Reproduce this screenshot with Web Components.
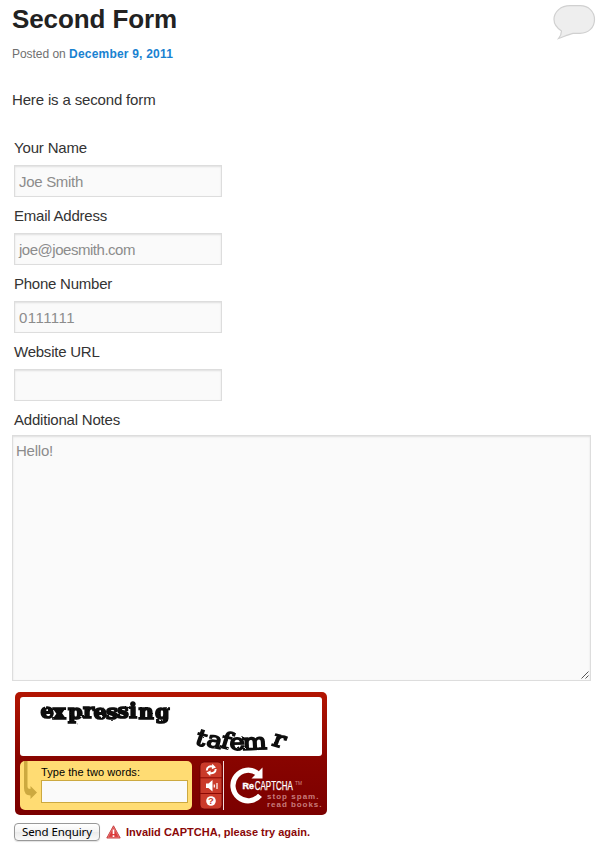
<!DOCTYPE html>
<html lang="en">
<head>
<meta charset="utf-8">
<title>Second Form</title>
<style>
body { margin: 0; background: #fff; font-family: "Liberation Sans", Arial, sans-serif; color: #222; }
</style>
</head>
<body>
<form-page></form-page>
<script>
const define = (name, html, setup) => {
  const t = document.createElement('template');
  t.innerHTML = html;
  customElements.define(name, class extends HTMLElement {
    connectedCallback() {
      if (this.shadowRoot) return;
      this.attachShadow({ mode: 'open' }).append(t.content.cloneNode(true));
      if (setup) setup(this, this.shadowRoot);
    }
  });
};

// One line of text, letter-spaced to take exactly the width given.
define('fit-text', `<style>:host{display:block;white-space:nowrap}span{display:inline-block}</style><span><slot></slot></span>`,
  (el, root) => {
    const s = root.querySelector('span');
    const w = s.getBoundingClientRect().width;
    s.style.letterSpacing = ((+el.getAttribute('width') - w) / el.textContent.length) + 'px';
  });

define('comment-bubble', `<style>:host{display:block;width:43px;height:36px;margin-top:1px}svg{display:block}</style>
<svg width="43" height="36" viewBox="0 0 43 36"><path d="M17 .7H27C35.500 .7 41.500 6.500 41.500 14.500C41.500 22.500 35.500 28.300 27 28.300H20C15 29.500 10 32 5.500 33.500C7.500 31 8.500 29 8.500 26C4 23 1 19 1 14.500C1 6.500 8 .7 17 .7Z" fill="#eee" stroke="#d0d0d0" stroke-width="1.200"/></svg>`);

define('post-header', `<style>
:host{display:flex;justify-content:space-between;height:88px;padding:4px 12px 0 12px;box-sizing:border-box}
h1{margin:0;font-size:26px;line-height:30px;font-weight:bold;color:#222}
.meta{display:flex;margin-top:12px;font-size:12px;line-height:16px;color:#707070}
b{color:#1982d1}
</style><div><h1><fit-text width="165">Second Form</fit-text></h1>
<div class="meta"><fit-text width="57">Posted on&nbsp;</fit-text><b><fit-text width="104">December 9, 2011</fit-text></b></div></div><comment-bubble></comment-bubble>`);

define('form-field', `<style>
:host{display:block;height:68px;padding-left:14px;font-size:15px}
.label{line-height:20px;height:27px;color:#333}
.box{box-sizing:border-box;width:208px;height:32px;border:1px solid #ddd;background:#fafafa;box-shadow:inset 0 1px 2px rgba(0,0,0,.11);padding:0 4px;line-height:31px;color:#8c8c8c}
</style><div class="label"></div><div class="box"></div>`, (el, r) => {
  const fill = (sel, text, w) => {
    if (!text) return;
    const f = document.createElement('fit-text');
    f.setAttribute('width', w); f.textContent = text;
    r.querySelector(sel).append(f);
  };
  fill('.label', el.getAttribute('label'), el.getAttribute('lw'));
  fill('.box', el.getAttribute('value'), el.getAttribute('vw'));
});

define('notes-field', `<style>
:host{display:block;padding-left:12px;font-size:15px}
.label{padding-left:2px;height:25px;line-height:20px;color:#333}
.area{position:relative;box-sizing:border-box;width:579px;height:246px;border:1px solid #ddd;background:#fafafa;box-shadow:inset 0 1px 2px rgba(0,0,0,.11);padding:5px 3px;line-height:20px;color:#8c8c8c}
svg{position:absolute;right:0;bottom:0}
</style><div class="label"><fit-text width="106">Additional Notes</fit-text></div>
<div class="area"><fit-text width="37">Hello!</fit-text><svg width="10" height="10" viewBox="0 0 10 10"><path d="M1.500 8.500L8.500 1.500M5.500 8.500L8.500 5.500" stroke="#555" stroke-width="1" fill="none"/></svg></div>`);

define('captcha-challenge', `<style>
:host{display:block;height:59px;background:#fff;border-radius:3px;overflow:hidden}svg{display:block}
text{fill:#080808;font-family:"DejaVu Serif",serif}
</style><svg width="302" height="59" viewBox="20 697 302 59">
<defs><filter id="rough" x="-5%" y="-20%" width="110%" height="140%"><feTurbulence type="fractalNoise" baseFrequency=".2" numOctaves="2" seed="4"/><feDisplacementMap in="SourceGraphic" scale="2"/></filter></defs>
<g filter="url(#rough)"><text font-weight="bold" font-size="21" stroke="#080808" stroke-width="1.700" x="40.500 53 68 83 93.500 106 117 129 138.500 155" y="718 718.500 719 718 718.500 718.500 718 718 718.500 718.500">expressing</text></g>
<g filter="url(#rough)" ><text font-size="22.500" stroke="#080808" stroke-width="1.600" transform="translate(194 0) scale(1.150 1)" x="0 10 22 31 42.500 67" y="744 746 747 750 750 745" rotate="17 13 15 -2 -3 18">tafemr</text></g>
</svg>`);

define('captcha-answer', `<style>
:host{display:flex;width:172px;height:49px;background:#ffdc73;border-radius:5px}
svg{flex:none;display:block;width:21px;height:49px}
.type{font-size:11px;line-height:13px;color:#000;margin:5px 0 1px}
.input{box-sizing:border-box;width:147px;height:23px;border:1px solid #cca940;background:#fafafa}
</style><svg viewBox="0 0 21 49"><path d="M4 0H7.500V25.500Q7.500 28 10.500 28V25L17 31.500L10.500 38V34.500Q4 34.500 4 27Z" fill="#cca940"/></svg>
<div><div class="type"><fit-text width="99">Type the two words:</fit-text></div><div class="input"></div></div>`);

define('captcha-buttons', `<style>:host{display:block;width:25px;height:49px;border-right:1px solid #f2dcdc;box-sizing:border-box}svg{display:block}</style>
<svg width="24" height="49" viewBox="0 0 24 49">
<rect x="1" y="1" width="22" height="47" rx="4" fill="#ca3a2a" stroke="#690000" stroke-width=".8"/>
<path d="M1 16.800H23M1 32.500H23" stroke="#8c0903"/>
<g fill="none" stroke="#fff" stroke-width="2"><path d="M7.800 9.500C7.800 6 11 4.700 14 5.700M16.700 8C16.700 11.500 13.500 13 10.500 12"/></g>
<path d="M13.300 2.800L17 6.500L12.800 8.300ZM11.200 15L7.500 11.500L11.700 9.500Z" fill="#fff"/>
<path d="M7 22.500H9.500L13.500 19V30.500L9.500 27H7Z" fill="#fff"/><path d="M15.300 23.500V26.500M18 22V28" stroke="#fff" stroke-width="1.200"/>
<circle cx="12" cy="40" r="4.800" fill="#fff"/><text x="12" y="43.400" text-anchor="middle" font-family="Liberation Sans, sans-serif" font-size="9.500" font-weight="bold" fill="#ca3a2a">?</text></svg>`);

define('captcha-logo', `<style>:host{display:block}svg{display:block}text{font-family:"Liberation Sans",sans-serif}</style>
<svg width="98" height="49" viewBox="224 761 98 49">
<path d="M257.500 773.300A15.300 15.300 0 1 0 260 795.300" fill="none" stroke="#fff" stroke-width="5.200"/>
<path d="M262.500 767.500V778.500H251.500Z" fill="#fff"/>
<text x="242.500" y="788.800" font-size="8.500" font-weight="bold" fill="#fff" stroke="#fff" stroke-width=".4" textLength="11.500" lengthAdjust="spacingAndGlyphs">Re</text>
<text x="254.800" y="789.500" font-size="12.500" fill="#fff" stroke="#fff" stroke-width=".25" textLength="38" lengthAdjust="spacingAndGlyphs">CAPTCHA</text>
<text x="295" y="785" font-size="5" fill="#d28c8c" textLength="7" lengthAdjust="spacingAndGlyphs">TM</text>
<text x="267" y="798.800" font-size="8" font-weight="bold" fill="#c87c7c" textLength="51.500">stop spam.</text>
<text x="267" y="807.200" font-size="8" font-weight="bold" fill="#c87c7c" textLength="54.500">read books.</text></svg>`);

define('captcha-box', `<style>
:host{display:block;box-sizing:border-box;width:312px;height:123px;margin:11px 0 0 15px;padding:5px;border-radius:5px;background:linear-gradient(#b31502,#880400 55%,#7b0000)}
.row{display:flex;margin-top:5px}captcha-buttons{margin-left:7px}
</style><captcha-challenge></captcha-challenge><div class="row"><captcha-answer></captcha-answer><captcha-buttons></captcha-buttons><captcha-logo></captcha-logo></div>`);

define('submit-row', `<style>
:host{display:flex;align-items:center;margin:7px 0 0 14px;height:19px}
.btn{box-sizing:border-box;width:86px;height:18px;border:1px solid #999;border-radius:4px;background:linear-gradient(#fff,#f3f3f3 50%,#ebebeb 51%,#fafafa);font:11.500px/16px "Noto Sans",sans-serif;color:#000;padding-left:7px;box-shadow:0 1px 1px rgba(0,0,0,.12)}
svg{margin:0 5px 0 6px}
.err{font-size:11px;font-weight:bold;line-height:16px;color:#8a0808}
</style><div class="btn"><fit-text width="70">Send Enquiry</fit-text></div>
<svg width="15" height="14" viewBox="0 0 15 14"><path d="M7.500.8L14.200 13H.8Z" fill="#db3b3b" stroke="#c54545" stroke-linejoin="round"/><path d="M7.500 2.200L13 12.300H2Z" fill="none" stroke="#ef8a8a" stroke-width=".6"/><path d="M7.500 4.500V9M7.500 10.300V12" stroke="#fff" stroke-width="1.700"/></svg>
<div class="err"><fit-text width="184">Invalid CAPTCHA, please try again.</fit-text></div>`);

define('form-page', `<style>
:host{display:block;width:608px;height:849px;overflow:hidden;background:#fff}
.intro{padding-left:12px;font-size:15px;line-height:24px;height:50px;color:#333}
</style><post-header></post-header>
<div class="intro"><fit-text width="143.500">Here is a second form</fit-text></div>
<form-field label="Your Name" lw="73" value="Joe Smith" vw="64"></form-field>
<form-field label="Email Address" lw="93" value="joe@joesmith.com" vw="116"></form-field>
<form-field label="Phone Number" lw="98" value="0111111" vw="56"></form-field>
<form-field label="Website URL" lw="85.500"></form-field>
<notes-field></notes-field><captcha-box></captcha-box><submit-row></submit-row>`);
</script>
</body>
</html>
